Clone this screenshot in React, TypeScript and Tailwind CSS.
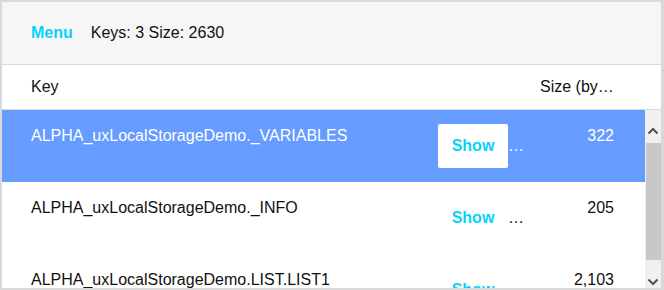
import React from "react";

interface Row {
  key: string;
  size: string;
}

const rows: Row[] = [
  { key: "ALPHA_uxLocalStorageDemo._VARIABLES", size: "322" },
  { key: "ALPHA_uxLocalStorageDemo._INFO", size: "205" },
  { key: "ALPHA_uxLocalStorageDemo.LIST.LIST1", size: "2,103" },
];

const Chevron = ({ down }: { down?: boolean }) => (
  <svg width="12" height="8" viewBox="0 0 12 8" className="block">
    <path
      d={down ? "M1.5 1.5 L6 6 L10.5 1.5" : "M1.5 6.5 L6 2 L10.5 6.5"}
      fill="none"
      stroke="#505050"
      strokeWidth="2"
    />
  </svg>
);

const App = () => {
  return (
    <div
      className="w-[664px] h-[290px] flex flex-col overflow-hidden border-t-2 border-l-2 border-b-2 border-r-[3px] border-[#d9d9d9] bg-white text-[16px] text-[#111]"
      style={{ fontFamily: '"Liberation Sans", Arial, sans-serif' }}
    >
      <div className="h-[63px] shrink-0 flex items-center gap-[18px] pl-[29px] bg-[#f6f6f6] border-b border-[#dadada]">
        <span className="font-bold text-[#06d3f6]">Menu</span>
        <span>Keys: 3 Size: 2630</span>
      </div>

      <div className="h-[45px] shrink-0 flex items-center border-b border-[#dadada] pr-[16px]">
        <div className="w-[436px] pl-[29px]">Key</div>
        <div className="w-[92px]" />
        <div className="flex-1 min-w-0 pl-[10px] pr-[31px] truncate">Size (bytes)</div>
      </div>

      <div className="flex-1 min-h-0 flex">
        <div className="flex-1 min-w-0 overflow-hidden">
          {rows.map((row, i) => {
            const selected = i === 0;
            return (
              <div
                key={row.key}
                className={
                  "h-[72px] shrink-0 flex items-start pt-[14px] " +
                  (selected ? "bg-[#669cff] text-white" : "bg-white text-[#111]")
                }
              >
                <div className="w-[436px] pl-[29px] whitespace-nowrap">{row.key}</div>
                <div className="w-[92px] whitespace-nowrap overflow-hidden">
                  <span
                    className={
                      "inline-block w-[70px] h-[44px] leading-[44px] text-center font-bold text-[#06d3f6] rounded-[2px] align-baseline " +
                      (selected ? "bg-white" : "bg-transparent")
                    }
                  >
                    Show
                  </span>
                  <span>…</span>
                </div>
                <div className="flex-1 min-w-0 pl-[10px] pr-[31px] text-right">{row.size}</div>
              </div>
            );
          })}
        </div>

        <div className="w-[16px] shrink-0 flex flex-col bg-[#f0f0f0]">
          <div className="h-[33px] flex justify-center pt-[17px]">
            <Chevron />
          </div>
          <div className="h-[117px] ml-[1px] bg-[#c8c8c8]" />
          <div className="flex-1 flex justify-center items-end pb-[2px]">
            <Chevron down />
          </div>
        </div>
      </div>
    </div>
  );
};

export default App;
